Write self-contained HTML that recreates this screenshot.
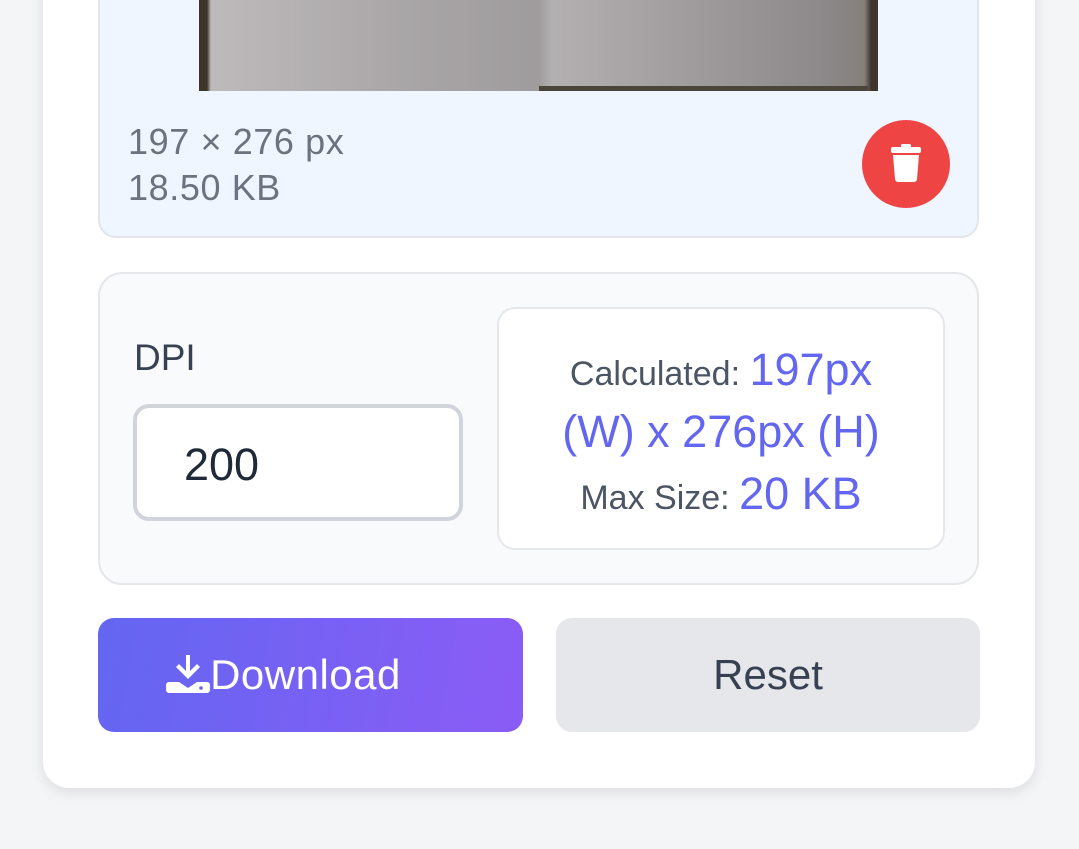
<!DOCTYPE html>
<html><head><style>
*{box-sizing:border-box;margin:0;padding:0}
body{width:1079px;height:849px;background:#f4f5f7;font-family:"Liberation Sans",sans-serif;position:relative;overflow:hidden}
.card{position:absolute;left:43px;top:-40px;width:992px;height:828px;background:#fff;border-radius:26px;box-shadow:0 4px 14px rgba(0,0,0,.1)}
.imgbox{position:absolute;left:98px;top:-20px;width:881px;height:258px;background:#eff6ff;border:2px solid #e2e5ea;border-radius:18px}
.photo{position:absolute;left:199px;top:0;width:679px;height:91px;background:linear-gradient(90deg,#3d342a 0,#3d342a 8px,#bdbabb 12px,#a9a6a7 30%,#9f9c9d 50%,#b3b0b1 52%,#8c898a 92%,#857f7a 98%,#3e362c 99%);}
.photo:after{content:"";position:absolute;left:340px;right:10px;bottom:0;height:5px;background:#4b443a}
.info{position:absolute;left:128px;top:119px;color:#6b7280;font-size:36px;line-height:46px;letter-spacing:.6px}
.del{position:absolute;left:862px;top:120px;width:88px;height:88px;border-radius:50%;background:#ef4444}
.set{position:absolute;left:98px;top:272px;width:881px;height:313px;background:#f9fafb;border:2px solid #e5e7eb;border-radius:24px}
.dpi{position:absolute;left:134px;top:337px;font-size:37px;color:#374151}
.inp{position:absolute;left:133px;top:404px;width:330px;height:117px;background:#fff;border:4px solid #d1d5db;border-radius:16px;font-size:45px;color:#1f2937;padding:31px 0 0 47px}
.calc{position:absolute;left:497px;top:307px;width:448px;height:243px;background:#fff;border:2px solid #e5e7eb;border-radius:18px;text-align:center;padding-top:35px}
.calc div{height:62px;color:#4b5563;font-size:34px;white-space:nowrap}
.calc b{font-weight:normal;color:#6366f1;font-size:45px}
.btn{position:absolute;top:618px;height:114px;border-radius:16px;font-size:42px;display:flex;align-items:center;justify-content:center}
.dl{left:98px;width:425px;background:linear-gradient(100deg,#6366f1,#8b5cf6);color:#fff;letter-spacing:.5px}
.rs{left:556px;width:424px;background:#e5e7eb;color:#374151}
</style></head><body>
<div class="card"></div>
<div class="imgbox"></div>
<div class="photo"></div>
<div class="info">197 × 276 px<br>18.50 KB</div>
<div class="del"><svg width="88" height="88" viewBox="0 0 88 88"><rect x="29" y="27" width="30" height="6" rx="2" fill="#fff"/><rect x="39" y="24" width="10" height="5" rx="1.5" fill="#fff"/><path d="M31 35h26l-2 24a3 3 0 0 1-3 3H36a3 3 0 0 1-3-3z" fill="#fff"/></svg></div>
<div class="set"></div>
<div class="dpi">DPI</div>
<div class="inp">200</div>
<div class="calc"><div>Calculated: <b>197px</b></div><div><b>(W) x 276px (H)</b></div><div>Max Size: <b>20 KB</b></div></div>
<div class="btn dl" style="padding-right:54px"><svg width="44" height="40" viewBox="0 0 44 40"><path d="M20 0h4v16l7-7 3 3-12 12-12-12 3-3 7 7z" fill="#fff"/><path d="M3 27h10l9 6 9-6h10a3 3 0 0 1 3 3v5a3 3 0 0 1-3 3H3a3 3 0 0 1-3-3v-5a3 3 0 0 1 3-3z" fill="#fff"/><circle cx="35" cy="33" r="1.8" fill="#7060f3"/></svg>Download</div>
<div class="btn rs">Reset</div>
</body></html>
